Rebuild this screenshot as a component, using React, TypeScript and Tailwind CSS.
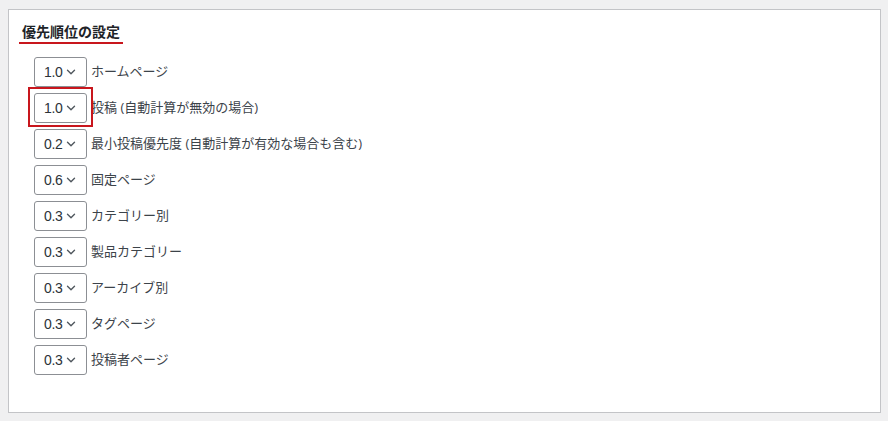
import { ChevronDown } from 'lucide-react';

const rows = [
  { value: '1.0', label: 'ホームページ' },
  { value: '1.0', label: '投稿 (自動計算が無効の場合)', highlight: true },
  { value: '0.2', label: '最小投稿優先度 (自動計算が有効な場合も含む)' },
  { value: '0.6', label: '固定ページ' },
  { value: '0.3', label: 'カテゴリー別' },
  { value: '0.3', label: '製品カテゴリー' },
  { value: '0.3', label: 'アーカイブ別' },
  { value: '0.3', label: 'タグページ' },
  { value: '0.3', label: '投稿者ページ' },
];

function PrioritySelect({ value }: { value: string }) {
  return (
    <div
      className="flex h-[30px] w-[53px] items-center justify-between rounded-[3px] border border-[#8c8f94] bg-white pl-[9px] pr-[8px] text-[14px] tracking-[-0.3px] text-[#2c3338]"
      style={{ fontFamily: '"Liberation Sans", Arial, sans-serif' }}
    >
      <span>{value}</span>
      <ChevronDown size={14} strokeWidth={2.4} className="text-[#50575e]" />
    </div>
  );
}

export default function App() {
  return (
    <div
      className="min-h-[421px] bg-[#f0f0f1] pt-[9px] pl-[8px] pr-[7px] pb-[8px]"
      style={{ fontFamily: '"Open Sans", "Noto Sans CJK JP", sans-serif' }}
    >
      <div className="h-[404px] border border-[#c3c4c7] bg-white">
        {/* Title */}
        <div className="pl-[10px] pt-[9px]">
          <h2 className="inline-block border-b-2 border-[#c8161d] px-[3px] text-[14px] font-bold leading-[20px] text-[#1d2327]">
            優先順位の設定
          </h2>
        </div>

        {/* Priority rows */}
        <div className="flex flex-col gap-[6px] pl-[25px] pt-[13px]">
          {rows.map((row, i) => (
            <div key={i} className="flex items-center gap-[4px]">
              <div className="relative">
                <PrioritySelect value={row.value} />
                {row.highlight && (
                  <div className="pointer-events-none absolute -left-[6px] -top-[6px] h-[40px] w-[65px] border-2 border-[#c8161d]" />
                )}
              </div>
              <span className="text-[13px] text-[#3c434a]">{row.label}</span>
            </div>
          ))}
        </div>
      </div>
    </div>
  );
}
